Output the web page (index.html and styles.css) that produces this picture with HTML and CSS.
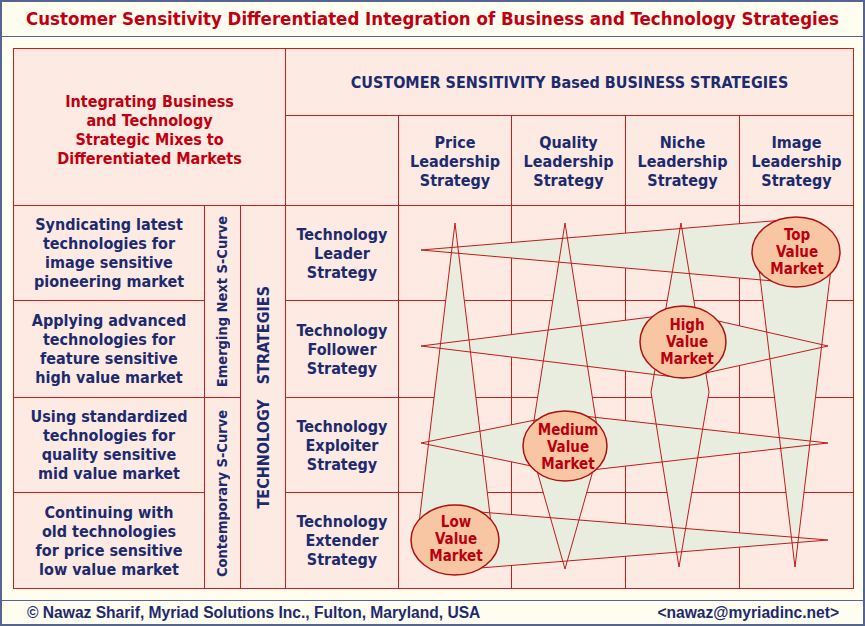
FILE: index.html
```html
<!DOCTYPE html>
<html>
<head>
<meta charset="utf-8">
<link rel="stylesheet" href="styles.css">
</head>
<body>
<div class="frame">
  <header class="title">Customer Sensitivity Differentiated Integration of Business and Technology Strategies</header>
  <main class="body">
    <div class="matrix">
      <div class="cell intro">Integrating Business<br>and Technology<br>Strategic Mixes to<br>Differentiated Markets</div>
      <div class="cell top-head">CUSTOMER SENSITIVITY Based BUSINESS STRATEGIES</div>
      <div class="cell"></div>
      <div class="cell colhead">Price<br>Leadership<br>Strategy</div>
      <div class="cell colhead">Quality<br>Leadership<br>Strategy</div>
      <div class="cell colhead">Niche<br>Leadership<br>Strategy</div>
      <div class="cell colhead">Image<br>Leadership<br>Strategy</div>

      <div class="cell vert curve-a"><span>Emerging Next S-Curve</span></div>
      <div class="cell vert curve-b"><span>Contemporary S-Curve</span></div>
      <div class="cell vert tech-strat"><span>TECHNOLOGY&nbsp;&nbsp; STRATEGIES</span></div>

      <div class="cell desc">Syndicating latest<br>technologies for<br>image sensitive<br>pioneering market</div>
      <div class="cell tech">Technology<br>Leader<br>Strategy</div>
      <div class="cell"></div><div class="cell"></div><div class="cell"></div><div class="cell"></div>

      <div class="cell desc">Applying advanced<br>technologies for<br>feature sensitive<br>high value market</div>
      <div class="cell tech">Technology<br>Follower<br>Strategy</div>
      <div class="cell"></div><div class="cell"></div><div class="cell"></div><div class="cell"></div>

      <div class="cell desc">Using standardized<br>technologies for<br>quality sensitive<br>mid value market</div>
      <div class="cell tech">Technology<br>Exploiter<br>Strategy</div>
      <div class="cell"></div><div class="cell"></div><div class="cell"></div><div class="cell"></div>

      <div class="cell desc">Continuing with<br>old technologies<br>for price sensitive<br>low value market</div>
      <div class="cell tech">Technology<br>Extender<br>Strategy</div>
      <div class="cell"></div><div class="cell"></div><div class="cell"></div><div class="cell"></div>

      <svg class="overlay" viewBox="13 48 841 541" width="841" height="541">
        <g class="fill">
          <polygon points="455,223 417,540 493,540"/>
          <polygon points="565,223 600,446 565,569 530,446"/>
          <polygon points="681,223 709,392 679,567 651,392"/>
          <polygon points="757,252 833,252 795,567"/>
          <polygon points="421,250 796,219 796,283"/>
          <polygon points="421,346 683,313 828,346 683,378"/>
          <polygon points="421,443 565,414 828,443 565,473"/>
          <polygon points="455,510 828,540 455,570"/>
        </g>
        <g class="edge">
          <polygon points="455,223 417,540 493,540"/>
          <polygon points="565,223 600,446 565,569 530,446"/>
          <polygon points="681,223 709,392 679,567 651,392"/>
          <polygon points="757,252 833,252 795,567"/>
          <polygon points="421,250 796,219 796,283"/>
          <polygon points="421,346 683,313 828,346 683,378"/>
          <polygon points="421,443 565,414 828,443 565,473"/>
          <polygon points="455,510 828,540 455,570"/>
        </g>
        <g class="bubble">
          <ellipse cx="796" cy="252" rx="44" ry="35"/>
          <ellipse cx="683" cy="342" rx="43" ry="36"/>
          <ellipse cx="565" cy="446" rx="42" ry="35"/>
          <ellipse cx="455" cy="540" rx="44" ry="35"/>
        </g>
        <g class="label">
          <text x="797" y="240">Top</text>
          <text x="797" y="257">Value</text>
          <text x="797" y="274">Market</text>
          <text x="687" y="330">High</text>
          <text x="687" y="347">Value</text>
          <text x="687" y="364">Market</text>
          <text x="568" y="435">Medium</text>
          <text x="568" y="452">Value</text>
          <text x="568" y="469">Market</text>
          <text x="456" y="527">Low</text>
          <text x="456" y="544">Value</text>
          <text x="456" y="561">Market</text>
        </g>
      </svg>
    </div>
  </main>
  <footer class="foot">
    <span>© Nawaz Sharif, Myriad Solutions Inc., Fulton, Maryland, USA</span>
    <span>&lt;nawaz@myriadinc.net&gt;</span>
  </footer>
</div>
</body>
</html>
```

FILE: styles.css
```css
* { box-sizing: border-box; }

html, body {
  margin: 0;
  padding: 0;
  background: #fffcf0;
}

.frame {
  width: 865px;
  height: 626px;
  border: 2px solid #56658f;
  background: #fffcf0;
  display: flex;
  flex-direction: column;
  font-family: "DejaVu Sans Condensed", "DejaVu Sans", sans-serif;
  font-stretch: condensed;
  font-weight: bold;
}

.title {
  height: 35px;
  border-bottom: 1px solid #56658f;
  color: #c00010;
  font-size: 18.5px;
  line-height: 34px;
  text-align: center;
}

.body {
  height: 563px;
  padding: 11px 11px;
}

.matrix {
  position: relative;
  display: grid;
  grid-template-columns: 191px 36px 45px 113px 113px 114px 114px 114px;
  grid-template-rows: 67px 90px 95px 97px 95px 96px;
  width: 841px;
  border-top: 1px solid #cc1c1c;
  border-left: 1px solid #cc1c1c;
}

.cell {
  background: #fdebe3;
  border-right: 1px solid #cc1c1c;
  border-bottom: 1px solid #cc1c1c;
  display: flex;
  align-items: center;
  justify-content: center;
  text-align: center;
  color: #1c2a6e;
  font-size: 16px;
  line-height: 19px;
}

.intro {
  grid-column: 1 / 4;
  grid-row: 1 / 3;
  color: #c00010;
  padding-top: 6px;
}

.top-head {
  grid-column: 4 / 9;
  font-size: 16px;
}

.colhead { padding-top: 2px; }

.curve-a { grid-column: 2; grid-row: 3 / 5; }
.curve-b { grid-column: 2; grid-row: 5 / 7; }
.tech-strat { grid-column: 3; grid-row: 3 / 7; }

.vert span {
  writing-mode: vertical-rl;
  transform: rotate(180deg);
  white-space: nowrap;
  font-size: 14.5px;
}

.tech-strat span { font-size: 16px; }

.overlay {
  position: absolute;
  left: -1px;
  top: -1px;
  pointer-events: none;
}

.overlay .fill polygon { fill: #e8eddf; stroke: none; }
.overlay .edge polygon { fill: none; stroke: #c41a1a; stroke-width: 1; }
.overlay .bubble ellipse { fill: #f8c6a2; stroke: #b01010; stroke-width: 1.5; }
.overlay .label text {
  fill: #b80010;
  font-family: "DejaVu Sans Condensed", "DejaVu Sans", sans-serif;
  font-stretch: condensed;
  font-weight: bold;
  font-size: 15px;
  text-anchor: middle;
}

.foot {
  flex: 1;
  border-top: 1px solid #56658f;
  display: flex;
  justify-content: space-between;
  align-items: center;
  padding: 0 24px 0 25px;
  color: #1c2a6e;
  font-family: "Liberation Sans Narrow", "Liberation Sans", sans-serif;
  font-stretch: condensed;
  font-weight: bold;
  font-size: 15.6px;
}
```
